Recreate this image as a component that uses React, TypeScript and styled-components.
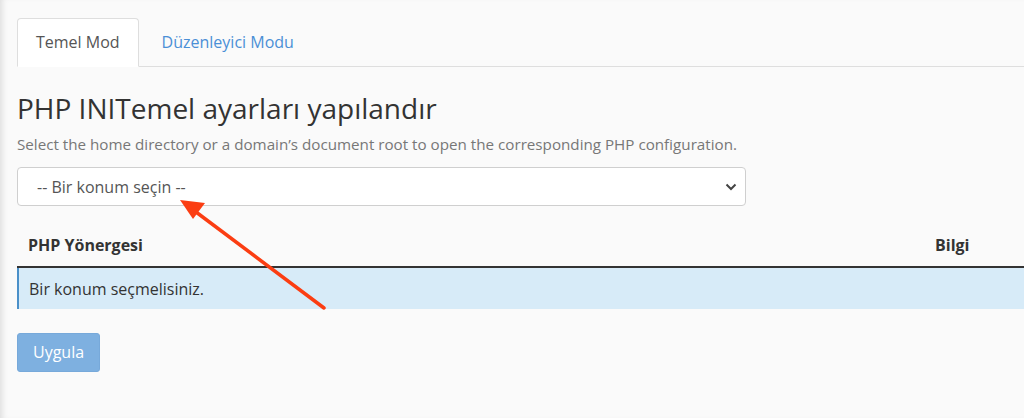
import styled, { createGlobalStyle } from "styled-components";

const GlobalStyle = createGlobalStyle`
  html, body {
    margin: 0;
    padding: 0;
    background-color: #fafafa;
    overflow: hidden;
  }
  body {
    font-family: "Open Sans", "Liberation Sans", sans-serif;
    color: #333;
  }
`;

const Page = styled.div`
  position: relative;
  width: 1024px;
  height: 418px;
  overflow: hidden;
  box-shadow: inset 6px 0 6px -4px rgba(0, 0, 0, 0.12);
`;

const Content = styled.div`
  width: 1140px;
  padding: 18px 0 0 17px;
  box-sizing: border-box;
`;

const Tabs = styled.ul`
  display: flex;
  margin: 0;
  padding: 0;
  list-style: none;
  border-bottom: 1px solid #dedede;
`;

const Tab = styled.li<{ $active?: boolean }>`
  margin-bottom: -1px;
  margin-right: 4px;
  padding: 11px 18px 12px 18px;
  font-size: 16px;
  line-height: 24px;
  border: 1px solid ${(p) => (p.$active ? "#dedede" : "transparent")};
  border-bottom-color: ${(p) => (p.$active ? "#fff" : "transparent")};
  border-radius: 4px 4px 0 0;
  background-color: ${(p) => (p.$active ? "#fff" : "transparent")};
  color: ${(p) => (p.$active ? "#555" : "#4a8fd6")};
`;

const Title = styled.h1`
  margin: 24px 0 0 0;
  font-size: 28px;
  font-weight: 400;
  line-height: 34px;
  color: #333;
`;

const Description = styled.p`
  margin: 9px 0 0 0;
  font-size: 15.2px;
  line-height: 21px;
  color: #777;
`;

const SelectBox = styled.div`
  display: flex;
  align-items: center;
  justify-content: space-between;
  width: 729px;
  height: 39px;
  margin-top: 12px;
  padding: 0 8px 0 19px;
  box-sizing: border-box;
  background-color: #fff;
  border: 1px solid #cfcfcf;
  border-radius: 4px;
  font-size: 16px;
  color: #555;
`;

const Table = styled.table`
  width: 1110px;
  margin-top: 20px;
  border-collapse: collapse;
  font-size: 16px;
`;

const HeadCell = styled.th<{ $width?: number }>`
  width: ${(p) => (p.$width ? `${p.$width}px` : "auto")};
  padding: 10px 10px 12px 10px;
  text-align: left;
  font-weight: 700;
  font-size: 16px;
  line-height: 18px;
  color: #333;
  border-bottom: 2px solid #333;
`;

const InfoRow = styled.tr`
  background-color: #d7ebf8;
`;

const InfoCell = styled.td`
  padding: 11px 10px 10px 10px;
  line-height: 20px;
  color: #333;
  border-left: 2px solid #4a90c9;
`;

const ApplyButton = styled.button`
  margin-top: 24px;
  padding: 8px 15px;
  font-family: "Open Sans", "Liberation Sans", sans-serif;
  font-size: 16px;
  line-height: 21px;
  color: #fff;
  background-color: #7eb0e0;
  border: 1px solid #77a9da;
  border-radius: 3px;
`;

const Overlay = styled.svg`
  position: absolute;
  left: 0;
  top: 0;
  pointer-events: none;
`;

const Chevron = () => (
  <svg width="12" height="8" viewBox="0 0 12 8">
    <path d="M1.5 1.5 L6 6 L10.5 1.5" fill="none" stroke="#444" strokeWidth="2" />
  </svg>
);

const App = () => {
  return (
    <>
      <GlobalStyle />
      <Page>
        <Content>
          <Tabs>
            <Tab $active>Temel Mod</Tab>
            <Tab>Düzenleyici Modu</Tab>
          </Tabs>
          <Title>PHP INITemel ayarları yapılandır</Title>
          <Description>
            Select the home directory or a domain’s document root to open the corresponding PHP
            configuration.
          </Description>
          <SelectBox>
            <span>-- Bir konum seçin --</span>
            <Chevron />
          </SelectBox>
          <Table>
            <thead>
              <tr>
                <HeadCell $width={887}>PHP Yönergesi</HeadCell>
                <HeadCell>Bilgi</HeadCell>
              </tr>
            </thead>
            <tbody>
              <InfoRow>
                <InfoCell colSpan={2}>Bir konum seçmelisiniz.</InfoCell>
              </InfoRow>
            </tbody>
          </Table>
          <ApplyButton disabled>Uygula</ApplyButton>
        </Content>
        <Overlay width="1024" height="418">
          <line x1="324" y1="308" x2="196" y2="212" stroke="#fb3d12" strokeWidth="3.5" strokeLinecap="round" />
          <polygon points="180,200 205,203 193,219" fill="#fb3d12" />
        </Overlay>
      </Page>
    </>
  );
};

export default App;
